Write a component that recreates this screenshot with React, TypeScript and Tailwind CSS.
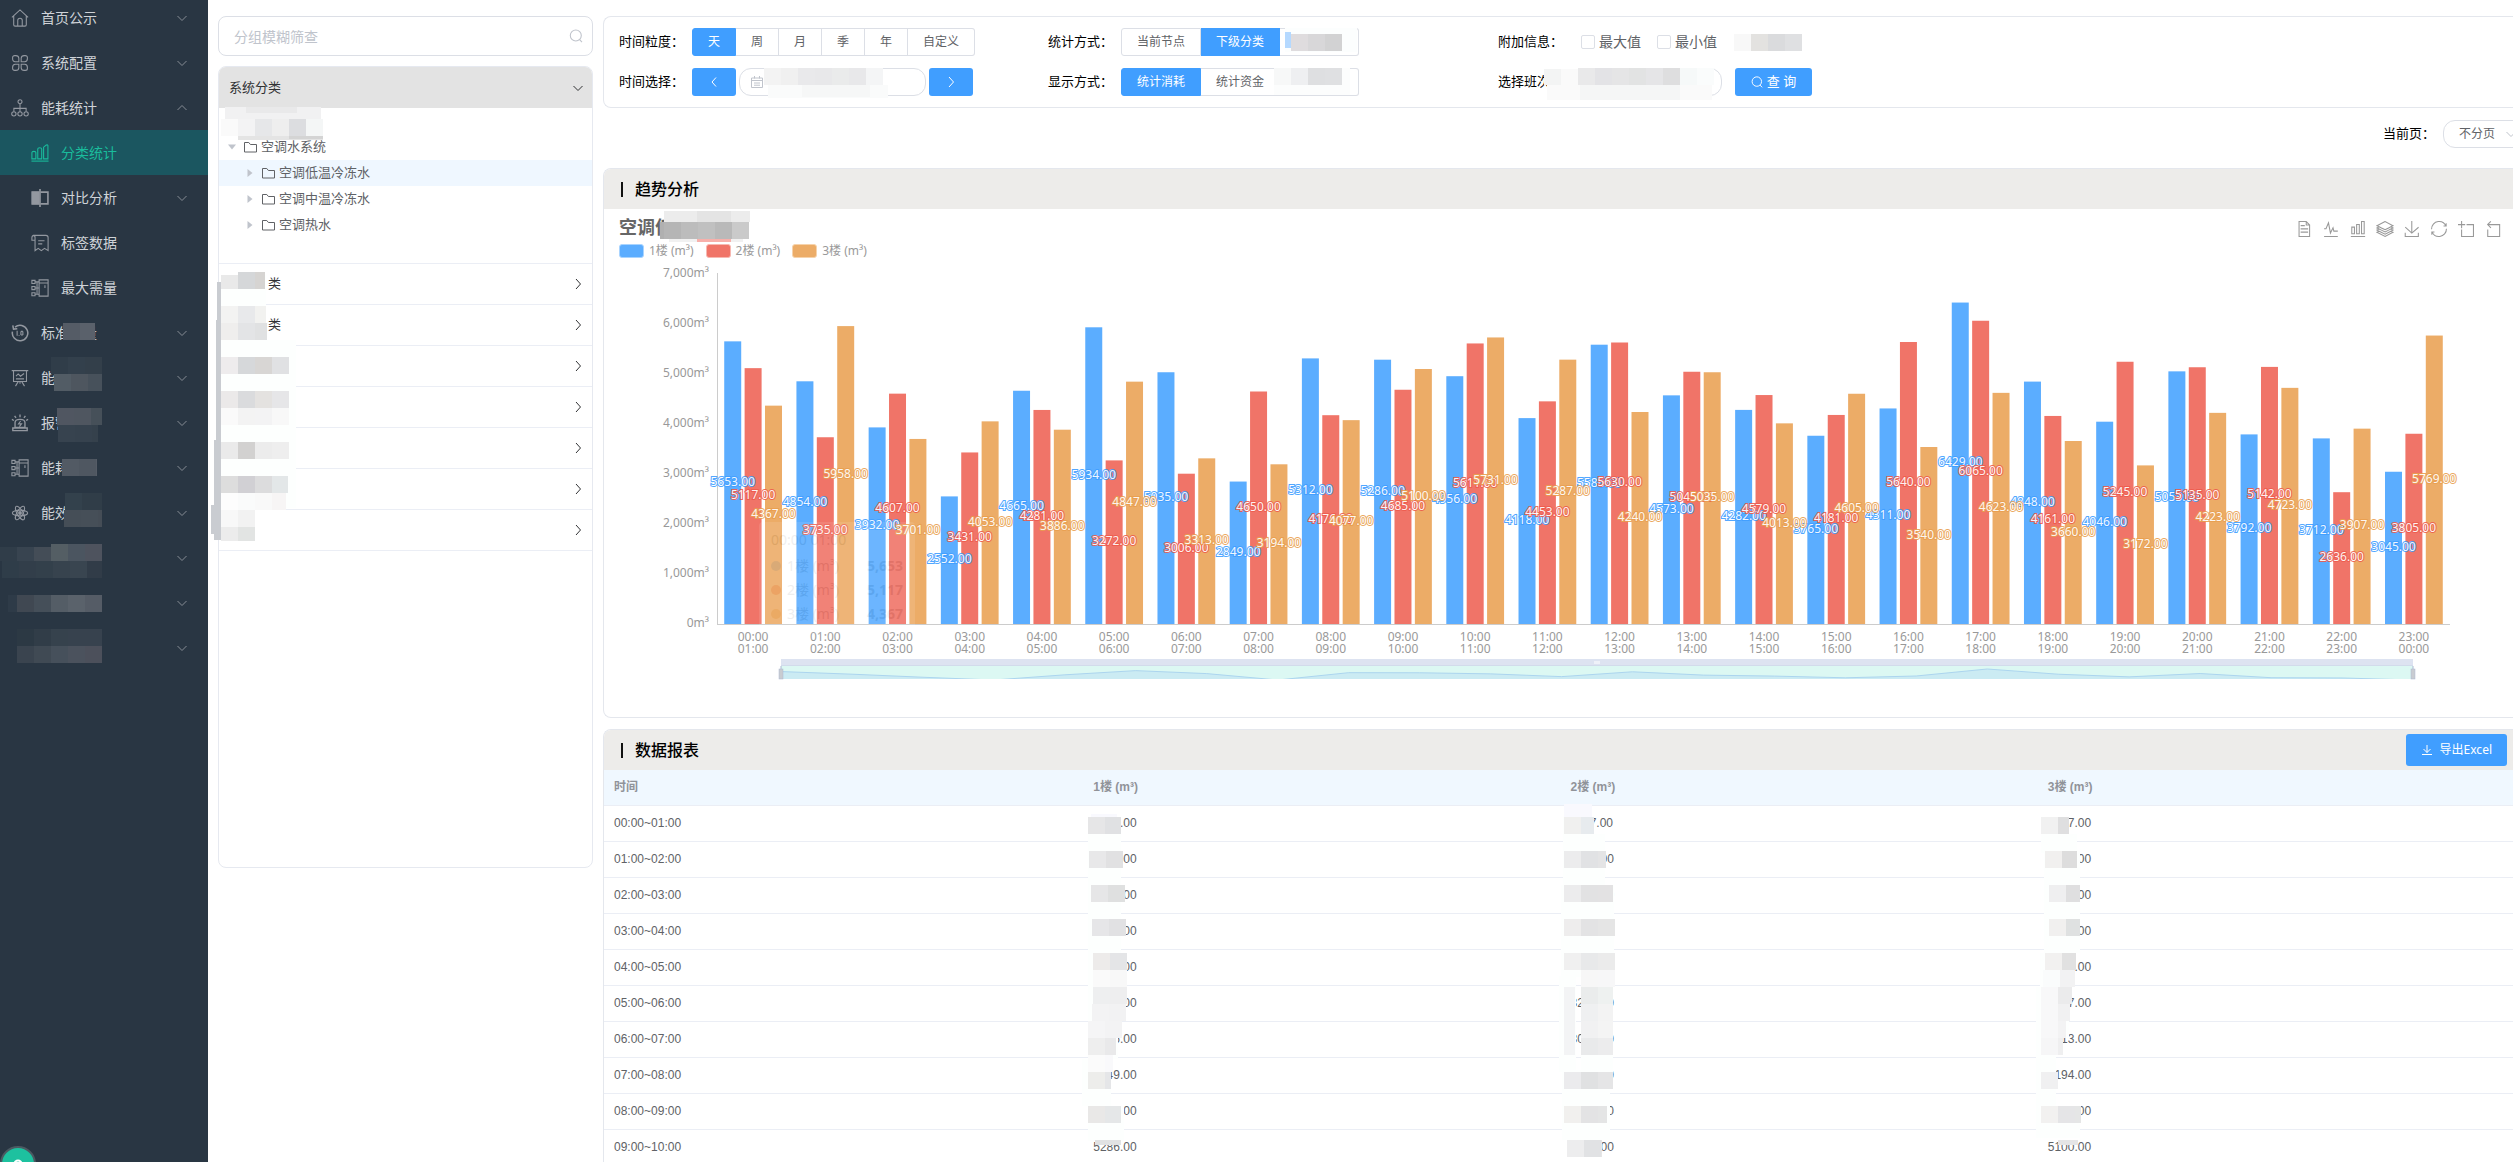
import { useLayoutEffect, useRef, useState } from "react";
import type { ReactNode } from "react";
import clsx from "clsx";

type Block = [x: number, y: number, width: number, height: number, fill: string];

const hours = Array.from({ length: 24 }, (_, i) => String(i).padStart(2, "0") + ":00");

const series = [
  {
    name: "1楼 (m³)",
    fill: "#5badff",
    stroke: "#409eff",
    dot: "bg-[#409eff]",
    swatch: "bg-[#5badff] border-[#a9d4ff]",
    data: [
      5653, 4854, 3932, 2552, 4665, 5934, 5035, 2849, 5312, 5286, 4956, 4118, 5586, 4573, 4282,
      3765, 4311, 6429, 4848, 4046, 5053, 3792, 3712, 3045,
    ],
  },
  {
    name: "2楼 (m³)",
    fill: "#f07468",
    stroke: "#ee5b4d",
    dot: "bg-[#ee5b4d]",
    swatch: "bg-[#f07468] border-[#f7b8b1]",
    data: [
      5117, 3735, 4607, 3431, 4281, 3272, 3006, 4650, 4176, 4685, 5611, 4453, 5630, 5045, 4579,
      4181, 5640, 6065, 4161, 5245, 5135, 5142, 2636, 3805,
    ],
  },
  {
    name: "3楼 (m³)",
    fill: "#ecac67",
    stroke: "#e99f4f",
    dot: "bg-[#e99f4f]",
    swatch: "bg-[#ecac67] border-[#f6d3ac]",
    data: [
      4367, 5958, 3701, 4053, 3886, 4847, 3313, 3194, 4077, 5100, 5731, 5287, 4240, 5035, 4013,
      4605, 3540, 4623, 3660, 3172, 4223, 4723, 3907, 5769,
    ],
  },
];

function Blocks({ className, blocks }: { className?: string; blocks: Block[] }) {
  const width = Math.max(...blocks.map((b) => b[0] + b[2]));
  const height = Math.max(...blocks.map((b) => b[1] + b[3]));
  return (
    <svg
      aria-hidden="true"
      width={width}
      height={height}
      shapeRendering="crispEdges"
      className={clsx("pointer-events-none absolute", className)}
    >
      {blocks.map(([x, y, w, h, fill], i) => (
        <rect key={i} x={x} y={y} width={w} height={h} fill={fill} />
      ))}
    </svg>
  );
}

// lays a list of colours out as one band of 17px tiles
function band(x: number, y: number, fills: string[], height = 17, last = 17): Block[] {
  return fills.map((fill, i) => [
    x + i * 17,
    y,
    i === fills.length - 1 ? last : 17,
    height,
    fill,
  ]);
}

function Chevron({ dir, className }: { dir: "up" | "down" | "left" | "right"; className?: string }) {
  const d = {
    up: "M1.5 8 6 3.5 10.5 8",
    down: "M1.5 4 6 8.5 10.5 4",
    left: "M8 1.5 4 6l4 4.5",
    right: "M4 1 8.5 6 4 11",
  }[dir];
  return (
    <svg viewBox="0 0 12 12" className={clsx("h-3 w-3 shrink-0", className)} fill="none" stroke="currentColor">
      <path d={d} />
    </svg>
  );
}

function SearchIcon({ className }: { className?: string }) {
  return (
    <svg viewBox="0 0 14 14" className={className} fill="none" stroke="currentColor" strokeWidth="1.1">
      <circle cx="6.8" cy="6.5" r="5.5" />
      <path d="m10.6 10.6 2.4 2.6" />
    </svg>
  );
}

const menuIcons: Record<string, ReactNode> = {
  home: (
    <path d="M1 9.2 10 1l9 8.2M3 7.8V17.5q0 1.5 1.5 1.5h11q1.5 0 1.5-1.5V7.8M7.5 19v-6.5q0-2.3 2.5-2.3t2.5 2.3V19" />
  ),
  grid: (
    <>
      <path d="M8.7 8.7H4.6A3 3 0 0 1 1.8 5.4V4A2.2 2.2 0 0 1 4 1.8h1.4a3.3 3.3 0 0 1 3.3 3z" />
      <path d="M11.3 8.7V4.8a3.3 3.3 0 0 1 3.3-3H16A2.2 2.2 0 0 1 18.2 4v1.4a3.3 3.3 0 0 1-3 3.3z" />
      <path d="M8.7 11.3v3.9a3.3 3.3 0 0 1-3.3 3H4A2.2 2.2 0 0 1 1.8 16v-1.4a3.3 3.3 0 0 1 3-3.3z" />
      <path d="M11.3 11.3h3.9a3.3 3.3 0 0 1 3 3.3V16a2.2 2.2 0 0 1-2.2 2.2h-1.4a3.3 3.3 0 0 1-3.3-3z" />
    </>
  ),
  tree: (
    <>
      <circle cx="10" cy="3" r="2.2" />
      <circle cx="3.2" cy="16.5" r="2.4" />
      <circle cx="10" cy="16.5" r="2.4" />
      <circle cx="16.8" cy="16.5" r="2.4" />
      <path d="M10 5.2v8.9M3.2 14v-3.6h13.6V14" />
    </>
  ),
  bars: (
    <>
      <path d="M1 16.5V9.5q0-1.3 2.2-1.3t2.2 1.3v7zM7.5 16.5v-11q0-1.3 2.2-1.3t2.2 1.3v11zM14 16.5v-13L17 1.2q1.8-.7 1.8.8v14.5z" />
      <path d="M.5 19h19" />
    </>
  ),
  compare: (
    <>
      <path d="M1 3h8v14H1z" fill="currentColor" />
      <path d="M10 0v20M11 3.5h7.8v13H11" strokeWidth="1.8" />
    </>
  ),
  receipt: (
    <>
      <path d="M4.5 7H1V4q0-2.5 2.5-2.5h13q2.5 0 2.5 2.5v14.5l-4-2.5-3.5 2.5L8 16l-3.5 2.5V4q0-2.5-2-2.5" />
      <path d="M8 7.5h7M8 11h4.5" />
    </>
  ),
  server: (
    <>
      <path d="M9 1h10v18H9zM9 4.5h10M15.5 7v3" />
      <path d="M1 1.5h3.5v3.5H1zM1 8.3h3.5v3.5H1zM1 15.2h3.5v3.5H1zM4.5 3.2H9M4.5 10H9M4.5 17H9M6.7 3.2V17" />
    </>
  ),
  gauge: (
    <>
      <path d="M4.5 3.5A8.6 8.6 0 1 1 1.6 8.5M2 1.5l.8 4.2 4.2-.4" strokeWidth="1.7" />
      <path d="M6.8 7.5v5.5M13.2 8.2v4M11 8.2v4M11 8.2h2.2M11 12.2h2.2M9 12.3v.7" />
    </>
  ),
  board: (
    <>
      <path d="M.8 1.8h18.4M2.8 1.8v12h14.4v-12M8 14l-3 5M12 14l3 5M10 14v2.5" />
      <path d="m5.5 8 2.5-2.5 2.5 2.5 4-3M5.5 11h9" />
    </>
  ),
  alarm: (
    <>
      <path d="M4.5 15V9.5q0-3.5 5.5-3.5t5.5 3.5V15zM2 15.5h16v3H2zM10 .5v3M4 2l1.6 2.3M16 2l-1.6 2.3M1 6l2.2 1.2M19 6l-2.2 1.2" strokeWidth="1.5" />
      <path d="M10.7 7.8 8.3 11h3.4l-2.4 3" />
    </>
  ),
  atom: (
    <>
      <ellipse cx="10" cy="10" rx="8.5" ry="3.2" />
      <ellipse cx="10" cy="10" rx="8.5" ry="3.2" transform="rotate(60 10 10)" />
      <ellipse cx="10" cy="10" rx="8.5" ry="3.2" transform="rotate(120 10 10)" />
      <circle cx="10" cy="10" r="1.5" fill="currentColor" />
    </>
  ),
};

const menu = [
  { icon: "home", label: "首页公示", arrow: "down" },
  { icon: "grid", label: "系统配置", arrow: "down" },
  { icon: "tree", label: "能耗统计", arrow: "up" },
  { icon: "bars", label: "分类统计", child: true, active: true },
  { icon: "compare", label: "对比分析", child: true, arrow: "down" },
  { icon: "receipt", label: "标签数据", child: true },
  { icon: "server", label: "最大需量", child: true },
  { icon: "gauge", label: "标准用量", arrow: "down" },
  { icon: "board", label: "能", arrow: "down" },
  { icon: "alarm", label: "报警", arrow: "down" },
  { icon: "server", label: "能耗", arrow: "down" },
  { icon: "atom", label: "能效", arrow: "down" },
  { arrow: "down" },
  { arrow: "down" },
  { arrow: "down" },
] as {
  icon?: string;
  label?: string;
  child?: boolean;
  active?: boolean;
  arrow?: "up" | "down";
}[];

const menuBlocks: Block[] = [
  ...band(63, 323, ["#555c66", "#5a616b"], 17, 15),
  ...band(51, 357, ["#303d49", "#33404c", "#333f4a"]),
  ...band(54, 374, ["#525c65", "#4e565f", "#47515b"], 17, 14),
  ...band(57, 408, ["#505661", "#4f5660", "#465059"], 17, 11),
  ...band(58, 425, ["#37434f", "#36424e", "#35414c"], 17, 6),
  ...band(62, 459, ["#525a64", "#4f5761", "#555c66"], 17, 1),
  ...band(65, 493, ["#33414c", "#303d48", "#303d48"], 17, 3),
  ...band(64, 510, ["#454e57", "#464f58", "#454d56"], 17, 4),
  ...band(0, 547, ["#303d49", "#384450", "#444d57"], 14),
  ...band(51, 544, ["#545e64", "#4b5560", "#4e535e"]),
  ...band(2, 561, ["#2f3d49", "#323e4a", "#33404b", "#37434e", "#394550", "#313c48"], 17, 15),
  [8, 595, 9, 17, "#2e3b48"],
  ...band(17, 595, ["#404852", "#454f59", "#545d66", "#5a626b", "#555c66"]),
  ...band(17, 629, ["#2c3944", "#313d48", "#36424d", "#37424e", "#37424e"]),
  ...band(17, 646, ["#3a444f", "#404a54", "#46505b", "#4b525d", "#4c505b"]),
];

function Sidebar() {
  return (
    <aside className="relative w-52 shrink-0 overflow-hidden bg-[#293643] text-sm text-[#cfd3d8]">
      <nav>
        <ul className="-mt-[5px]">
          {menu.map((item, i) => (
            <li key={i}>
              <a
                href="#"
                aria-label={item.label ?? "菜单"}
                className={clsx(
                  "flex h-[45px] items-center pr-5",
                  item.child ? "pl-[31px]" : "pl-[11px]",
                  item.active && "bg-[#1b5660] text-[#1abc9c]"
                )}
              >
                {item.icon && (
                  <svg
                    viewBox="0 0 20 20"
                    className={clsx("mr-3 h-[18px] w-[18px] shrink-0", !item.active && "text-[#9398a0]")}
                    fill="none"
                    stroke="currentColor"
                    strokeWidth="1.2"
                  >
                    {menuIcons[item.icon]}
                  </svg>
                )}
                <span>{item.label}</span>
                {item.arrow && <Chevron dir={item.arrow} className="ml-auto text-[#878d95]" />}
              </a>
            </li>
          ))}
        </ul>
      </nav>
      <Blocks className="left-0 top-0" blocks={menuBlocks} />
      <button
        type="button"
        aria-label="设置"
        className="absolute -bottom-5 left-0 flex h-9 w-9 items-center justify-center rounded-full border-2 border-[#4b5a62] bg-[#1dc19f] text-white"
      >
        <svg viewBox="0 0 10 10" className="h-2.5 w-2.5" fill="none" stroke="currentColor" strokeWidth="2">
          <circle cx="5" cy="5" r="3.5" />
        </svg>
      </button>
    </aside>
  );
}

const treeNodes = [
  { label: "空调低温冷冻水", active: true },
  { label: "空调中温冷冻水" },
  { label: "空调热水" },
];

// origin is the top left corner of the whole column
const treeBlocks: Block[] = [
  [17, 107, 96, 12, "#f1f1f2"],
  [38, 107, 51, 6, "#e9e9ea"],
  ...band(13, 119, ["#fafafa", "#f3f3f4", "#e6e7e9", "#eeeeee", "#dcdde0", "#f4f6f6"]),
  [30, 136, 85, 4, "#e4e4e4"],
  [81, 136, 34, 3, "#d4d4d4"],
  [9, 282, 4, 220, "#c9ccd1"],
  [8, 320, 5, 150, "#c9ccd1"],
  [6, 440, 7, 80, "#c9ccd1"],
  [3, 505, 10, 29, "#c9ccd1"],
  [6, 534, 8, 6, "#c9ccd1"],
  [13, 275, 45, 70, "#fdfffe"],
  [13, 340, 75, 168, "#fdfffe"],
  [13, 508, 34, 32, "#fdfffe"],
  ...band(13, 275, ["#e9e9e9"], 14),
  ...band(30, 272, ["#d5d7d9", "#d6d4d2"], 17, 10),
  ...band(13, 306, ["#f3f3f2", "#e8e9eb", "#f2f2f0"], 17, 11),
  ...band(13, 323, ["#efeeed", "#e3e4e6", "#e0e1e2"], 17, 12),
  ...band(13, 357, ["#eeeced", "#d6d8da", "#d8d6d4", "#e0e1e3"]),
  ...band(13, 391, ["#ebe9e9", "#dadbdd", "#e4e2e0", "#e6e6e8"]),
  ...band(13, 408, ["#fafafa", "#f3f3f3", "#f3f3f4", "#f8f8f8"]),
  ...band(13, 442, ["#eaeaea", "#d2d1d0", "#ececec", "#eeeeee"]),
  ...band(13, 476, ["#dddddd", "#d1d0d4", "#dcdcdd", "#e3e7e8"], 17, 16),
  ...band(13, 493, ["#fdfdfd", "#fafbfb", "#f9f9f9", "#f7f5f5"], 17, 14),
  ...band(13, 510, ["#f8f8f8", "#f2f2f2"]),
  ...band(13, 527, ["#ececec", "#e2e4e3"], 14),
];

function FolderIcon() {
  return (
    <svg viewBox="0 0 13 12" className="mr-1 h-3 w-[13px] shrink-0" fill="none" stroke="#606266">
      <path d="M.5 1.500h4.300l1.600 2h6.100v7.500H.5z" />
    </svg>
  );
}

function CategoryPanel() {
  return (
    <div className="relative flex w-[385px] shrink-0 flex-col gap-[10px] pb-4 pl-[10px] pt-4 text-[13px] text-[#606266]">
      <div className="relative">
        <input
          type="text"
          aria-label="分组模糊筛查"
          placeholder="分组模糊筛查"
          className="h-10 w-full rounded-lg border border-[#dcdfe6] px-[15px] text-sm placeholder:text-[#c0c4cc]"
        />
        <SearchIcon className="absolute right-[10px] top-[13px] h-3.5 w-3.5 text-[#c0c4cc]" />
      </div>

      <div className="h-[802px] overflow-hidden rounded-lg border border-[#e6e9f0]">
        <button
          type="button"
          className="flex h-[41px] w-full items-center justify-between bg-[#e3e3e3] pl-[10px] pr-2 text-[#303133]"
        >
          系统分类
          <Chevron dir="down" />
        </button>
        <ul className="h-[156px] border-b border-[#ebeef5] pt-[26px]">
          <li className="flex h-[26px] items-center pl-[9px]">
            <svg viewBox="0 0 8 8" className="mr-2 h-2 w-2" fill="#c0c4cc">
              <path d="M0 1.500h8L4 6.500z" />
            </svg>
            <FolderIcon />
            空调水系统
          </li>
          {treeNodes.map((node) => (
            <li
              key={node.label}
              className={clsx("flex h-[26px] items-center pl-[27px]", node.active && "bg-[#eff7ff]")}
            >
              <svg viewBox="0 0 8 8" className="mr-2 h-2 w-2" fill="#c0c4cc">
                <path d="M1.500 0v8L6.500 4z" />
              </svg>
              <FolderIcon />
              {node.label}
            </li>
          ))}
        </ul>
        {["类", "类", "", "", "", "", ""].map((label, i) => (
          <button
            key={i}
            type="button"
            aria-label="分类"
            className="flex h-[41px] w-full items-center border-b border-[#ebeef5] pl-[49px] pr-2 text-[#303133]"
          >
            {label}
            <Chevron dir="right" className="ml-auto" />
          </button>
        ))}
      </div>
      <Blocks className="left-0 top-0" blocks={treeBlocks} />
    </div>
  );
}

function Segments({ items, active }: { items: string[]; active: string }) {
  return (
    <div className="flex h-7 text-xs">
      {items.map((item, i) => (
        <button
          key={i}
          type="button"
          aria-label={item || "其他"}
          aria-pressed={item === active}
          className={clsx(
            "whitespace-nowrap border-y border-r px-[15px] first:rounded-l-[3px] first:border-l last:rounded-r-[3px]",
            !item && "w-[79px]",
            item === active
              ? "border-[#409eff] bg-[#409eff] text-white"
              : "border-[#dcdfe6] bg-white text-[#606266]"
          )}
        >
          {item}
        </button>
      ))}
    </div>
  );
}

function Field({ label, children }: { label: string; children: ReactNode }) {
  return (
    <div className="relative flex h-7 items-center">
      <span className="w-[73px] shrink-0 text-[13px] text-black">{label}</span>
      {children}
    </div>
  );
}

function Filters() {
  return (
    <form className="grid grid-cols-[429px_450px_1fr] gap-y-3 rounded-l-lg border border-r-0 border-[#e4e7ed] px-[15px] py-[11px]">
      <Field label="时间粒度：">
        <Segments items={["天", "周", "月", "季", "年", "自定义"]} active="天" />
      </Field>
      <Field label="统计方式：">
        <Segments items={["当前节点", "下级分类", ""]} active="下级分类" />
        <Blocks
          className="left-[236px] -top-1"
          blocks={[
            [1, 4, 72, 24, "#fcfefe"],
            [1, 8, 6, 16, "#b5d9ff"],
            ...band(7, 10, ["#dfdcde", "#d8d7d9", "#d2d2d3"]),
          ]}
        />
      </Field>
      <Field label="附加信息：">
        <div className="flex items-center gap-4 pl-[10px] text-sm text-[#606266]">
          {["最大值", "最小值"].map((name) => (
            <label key={name} className="flex items-center gap-1">
              <input
                type="checkbox"
                className="h-3.5 w-3.5 appearance-none rounded-[2px] border border-[#dcdfe6] bg-white"
              />
              {name}
            </label>
          ))}
        </div>
        <Blocks
          className="left-[236px] top-1.5"
          blocks={band(0, 0, ["#f8f8f8", "#e3e2e0", "#dadbdd", "#dfe0e2"])}
        />
      </Field>

      <Field label="时间选择：">
        <button
          type="button"
          aria-label="上一个"
          className="flex h-7 w-11 items-center justify-center rounded-[3px] bg-[#409eff] text-white"
        >
          <Chevron dir="left" />
        </button>
        <div className="relative mx-[3px]">
          <svg
            viewBox="0 0 12 12"
            className="absolute left-3 top-2 h-3 w-3"
            fill="none"
            stroke="#c0c4cc"
          >
            <path d="M.5 2h11v9.500H.5zM.5 4.500h11M3.500 0v2.500M8.500 0v2.500M3 7h6M3 9.200h6" />
          </svg>
          <input
            type="text"
            aria-label="时间选择"
            className="block h-7 w-[187px] rounded-xl border border-[#dcdfe6] pl-8 text-xs"
          />
        </div>
        <button
          type="button"
          aria-label="下一个"
          className="flex h-7 w-11 items-center justify-center rounded-[3px] bg-[#409eff] text-white"
        >
          <Chevron dir="right" />
        </button>
        <Blocks
          className="left-[145px] top-0"
          blocks={[
            [4, 17, 120, 13, "#fafbfb"],
            ...band(0, 0, ["#f3f3f3", "#f0f0f0", "#e9e9eb", "#e8e8ea", "#eaebeb", "#e8e8ea", "#f4f5f6"]),
            [38, 17, 68, 12, "#f6f7f7"],
          ]}
        />
      </Field>
      <Field label="显示方式：">
        <Segments items={["统计消耗", "统计资金", ""]} active="统计消耗" />
        <Blocks
          className="-top-1 left-[223px]"
          blocks={[
            [3, 4, 76, 27, "#fcfdfd"],
            ...band(3, 4, ["#f7f8f8", "#eeeff1", "#dedfe1", "#dfe0e2"]),
          ]}
        />
      </Field>
      <Field label="选择班次：">
        <input
          type="text"
          aria-label="选择班次"
          className="h-7 w-[151px] rounded-xl border border-[#dcdfe6] px-3 text-xs"
        />
        <button
          type="submit"
          className="ml-[13px] flex h-7 w-[77px] items-center justify-center gap-1 rounded-[3px] bg-[#409eff] text-[13px] text-white"
        >
          <SearchIcon className="h-3 w-3" />
          查 询
        </button>
        <Blocks
          className="left-[46px] top-0"
          blocks={[
            [3, 17, 165, 15, "#fafafa"],
            ...band(0, 1, ["#f3f4f4", "#fafafa"], 16),
            ...band(34, 0, ["#e9e9ea", "#e3e3e6", "#e5e5e6", "#e2e3e3", "#e5e5e7", "#dededf", "#f6f9f9", "#fafcfc"]),
            [36, 17, 100, 15, "#f5f6f6"],
          ]}
        />
      </Field>
    </form>
  );
}

const toolIcons = [
  { label: "数据视图", d: "M17.5,17.3H33M45.4,29.5h-28M11.5,2v56H51V14.8L38.4,2H11.5zM38.4,2.2v12.7H51M45.4,41.7h-28" },
  { label: "折线图", d: "M4.1,28.9h7.1l9.3-22l7.4,38l9.7-19.7l3,12.8h14.9M4.1,58h51.4" },
  { label: "柱状图", d: "M6.7,22.9h10V48h-10V22.9zM24.9,13h10v35h-10V13zM43.2,2h10v46h-10V2zM3.1,58h53.7" },
  { label: "堆叠", d: "M8.2,38.4l-8.4,4.1l30.6,15.3L60,42.5l-8.1-4.1l-21.5,11L8.2,38.4zM51.9,30l-8.1,4.2l-13.4,6.9l-13.9-6.9L8.2,30l-8.4,4.2l8.4,4.2l22.2,11l21.5-11l8.1-4.2L51.9,30zM51.9,21.7l-8.1,4.2L35.7,30l-5.3,2.8L24.9,30l-8.4-4.1l-8.3-4.2l-8.4,4.2L8.2,30l8.3,4.2l13.9,6.9l13.4-6.9l8.1-4.2l8.1-4.1L51.9,21.7zM30.4,2.2L-0.2,17.5l8.4,4.1l8.3,4.2l8.4,4.2l5.5,2.7l5.3-2.7l8.1-4.2l8.1-4.2l8.1-4.1L30.4,2.2z" },
  { label: "保存为图片", d: "M4.7,22.9L29.3,45.5L54.7,23.4M4.6,43.6L4.6,58L53.8,58L53.8,43.6M29.2,45.1L29.2,0" },
  { label: "还原", d: "M47,18.9h9.8V8.7M56.3,20.1C52.1,9,40.5,0.6,26.8,2.1C12.6,3.7,1.6,16.2,2.1,30.6M13,41.1H3.1v10.2M3.7,39.9c4.2,11.1,15.8,19.5,29.5,18c14.2-1.6,25.2-14.1,24.7-28.5" },
  { label: "区域缩放", d: "M0,13.5h26.9M13.5,26.9V0M32.1,13.5H58V58H13.5V32.1" },
  { label: "区域缩放还原", d: "M22,1.4L9.9,13.5l12.3,12.3M10.3,13.5H54.9v44.6H10.3v-26" },
];

const GRID_LEFT = 113;
const GRID_RIGHT = 63;
const AXIS_Y = 366;

function BarChart() {
  const ref = useRef<HTMLDivElement>(null);
  const [width, setWidth] = useState(1909);

  useLayoutEffect(() => {
    const el = ref.current;
    if (!el) return;
    const update = () => setWidth(el.clientWidth);
    update();
    const observer = new ResizeObserver(update);
    observer.observe(el);
    return () => observer.disconnect();
  }, []);

  const gridEnd = width - GRID_RIGHT;
  const step = (gridEnd - GRID_LEFT) / hours.length;
  const barWidth = (step * 0.8) / 3.4;
  const barX = (s: number, i: number) => GRID_LEFT + i * step + step * 0.1 + s * barWidth * 1.2;

  // zoom slider
  const zoomStart = 177;
  const zoomEnd = width - 100;
  const zoomStep = (zoomEnd - zoomStart) / (hours.length - 1);
  const shadow = series[0].data
    .map((v, i) => `${zoomStart + i * zoomStep},${Math.min(422, 411 + (6429 - v) * 0.0033)}`)
    .join(" ");

  return (
    <div ref={ref} className="relative h-[459px]">
      <svg width={width} height={459} className="block" fontSize="12">
        {[0, 1, 2, 3, 4, 5, 6, 7].map((n) => (
          <text key={n} x={GRID_LEFT - 8} y={AXIS_Y - n * 50 + 3} textAnchor="end" fill="#999">
            {n === 0 ? "0m³" : `${n},000m³`}
          </text>
        ))}
        {series.map((s, si) =>
          s.data.map((v, i) => (
            <rect
              key={`${si}-${i}`}
              x={barX(si, i)}
              y={AXIS_Y - v * 0.05}
              width={barWidth}
              height={v * 0.05}
              fill={s.fill}
            />
          ))
        )}
        <path
          d={`M${GRID_LEFT + 0.5} 15V${AXIS_Y + 0.5}H${gridEnd}`}
          fill="none"
          stroke="#ccc"
          shapeRendering="crispEdges"
        />
        {series.map((s, si) =>
          s.data.map((v, i) => (
            <text
              key={`${si}-${i}`}
              x={barX(si, i) + barWidth / 2}
              y={AXIS_Y - v * 0.025 + 3}
              textAnchor="middle"
              fill="#fff"
              stroke={s.stroke}
              strokeWidth="2"
              paintOrder="stroke"
              opacity="0.9"
            >
              {`${v}.00`}
            </text>
          ))
        )}
        {hours.map((h, i) => (
          <text key={h} textAnchor="middle" fill="#999">
            <tspan x={GRID_LEFT + (i + 0.5) * step} y={AXIS_Y + 17}>
              {h}
            </tspan>
            <tspan x={GRID_LEFT + (i + 0.5) * step} y={AXIS_Y + 29}>
              {hours[(i + 1) % 24]}
            </tspan>
          </text>
        ))}

        <rect x={zoomStart} y={401} width={zoomEnd - zoomStart} height={7} fill="#dde3f1" />
        <rect x={zoomStart} y={408} width={zoomEnd - zoomStart} height={13} fill="#dcf8f3" />
        <path d={`M${zoomStart} 407.5H${zoomEnd}`} stroke="#d2dbeb" />
        <clipPath id="zoom-clip">
          <rect x={zoomStart} y={401} width={zoomEnd - zoomStart} height={20} />
        </clipPath>
        <g clipPath="url(#zoom-clip)">
          <polygon points={`${zoomStart},421 ${shadow} ${zoomEnd},421`} fill="#cbebf3" />
          <polyline points={shadow} fill="none" stroke="#acd5ef" />
        </g>
        <path
          d={`M${(zoomStart + zoomEnd) / 2 - 2} 403v3m2-3v3m2-3v3`}
          stroke="#fff"
          strokeWidth="1"
        />
        {[zoomStart, zoomEnd].map((x) => (
          <g key={x}>
            <path d={`M${x} 408v4`} stroke="#acb8d1" />
            <rect x={x - 2} y={411} width={4} height={10} fill="#c9ccd1" stroke="#acb8d1" strokeWidth="0.5" />
          </g>
        ))}
      </svg>

      {/* tooltip, fading out */}
      <div className="absolute left-[155px] top-[264px] w-[156px] rounded bg-white px-3 py-2 text-sm text-[#666] opacity-10">
        <div className="mb-1">00:00 01:00</div>
        {series.map((s) => (
          <div key={s.name} className="flex h-6 items-center">
            <span className={clsx("mr-1.5 h-2.5 w-2.5 rounded-full", s.dot)} />
            {s.name}
            <b className="ml-auto">{s.data[0].toLocaleString("en-US")}</b>
          </div>
        ))}
      </div>
    </div>
  );
}

function CardHeader({ title, children }: { title: string; children?: ReactNode }) {
  return (
    <div className="flex h-10 items-center justify-between bg-[#edecea] pl-[17px] pr-1.5 text-black">
      <h2 className="flex items-center gap-3 text-base font-medium">
        <span className="h-[15px] w-[2px] bg-[#111]" />
        {title}
      </h2>
      {children}
    </div>
  );
}

function TrendCard() {
  return (
    <section className="overflow-hidden rounded-l-lg border border-r-0 border-[#e4e7ed]">
      <CardHeader title="趋势分析" />
      <div className="relative flex h-[35px] items-center justify-between pl-[15px] pr-3">
        <h3 className="text-lg font-bold text-[#666]">空调低</h3>
        <Blocks
          className="left-[55px] top-0.5"
          blocks={[
            [5, 0, 86, 11, "#ececec"],
            [38, 0, 34, 11, "#e4e4e4"],
            [1, 11, 4, 17, "#b0b0b0"],
            ...band(5, 11, ["#b5b5b5", "#bcbcbc", "#c0c0c0", "#b9b9b9", "#cacaca"]),
            [10, 28, 74, 3, "#f1f1f1"],
            [38, 28, 34, 3, "#f7b0ab"],
          ]}
        />
        <div className="flex gap-[11px] pt-1">
          {toolIcons.map((icon) => (
            <button key={icon.label} type="button" aria-label={icon.label} title={icon.label}>
              <svg
                viewBox="0 0 60 60"
                className="block h-4 w-4 overflow-visible"
                fill="none"
                stroke="#999"
                strokeWidth="4"
              >
                <path d={icon.d} />
              </svg>
            </button>
          ))}
        </div>
      </div>
      <ul className="flex h-3.5 items-center gap-3 pl-[15px] text-xs text-[#999]">
        {series.map((s) => (
          <li key={s.name} className="flex items-center gap-[5px]">
            <span className={clsx("h-3.5 w-[25px] rounded-[3px] border", s.swatch)} />
            {s.name}
          </li>
        ))}
      </ul>
      <BarChart />
    </section>
  );
}

// tiles laid over the figures of each value column, from the top of its header cell
const tableBlocks: Block[][] = [
  [
    [10, 44, 26, 4, "#f9f9fe"],
    [7, 47, 33, 204, "#fdfffe"],
    [7, 251, 30, 38, "#fdfffe"],
    [1, 289, 29, 47, "#fdfffe"],
    [7, 336, 36, 35, "#fdfffe"],
    ...band(7, 47, ["#e6e6e7", "#e0e1e3"], 17, 16),
    ...band(8, 81, ["#e8e8e9", "#e1e1e2"]),
    ...band(10, 115, ["#e6e6e7", "#dfe0e0"]),
    ...band(11, 149, ["#e6e6e8", "#e1e1e3"]),
    ...band(12, 183, ["#edebea", "#e4e5e7"]),
    ...band(12, 200, ["#fafafa", "#f8f8f8"]),
    ...band(12, 217, ["#eeeff0", "#eeeeef"]),
    ...band(11, 234, ["#f3f3f4", "#f2f2f3"]),
    ...band(7, 251, ["#f5f5f6", "#f3f3f4"]),
    ...band(7, 268, ["#eeeeee", "#e9e9ea"], 17, 11),
    ...band(7, 285, ["#fbfbfb", "#f9f9fb"], 17, 8),
    ...band(7, 302, ["#ededeb", "#e5e6e8"], 17, 6),
    ...band(7, 336, ["#e9e8e7", "#e5e7e8"], 17, 16),
    [14, 370, 26, 5, "#e1e2e3"],
  ],
  [
    [5, 34, 28, 13, "#f9f9fe"],
    [4, 47, 30, 17, "#fdfffe"],
    [4, 64, 42, 54, "#fdfffe"],
    [2, 115, 53, 92, "#fdfffe"],
    [0, 206, 17, 96, "#fdfffe"],
    [22, 206, 32, 96, "#fdfffe"],
    [3, 300, 48, 70, "#fdfffe"],
    ...band(5, 47, ["#f0f0ef", "#e7ebee"], 17, 13),
    ...band(5, 81, ["#ececed", "#e1e2e4", "#e4e4e5"], 17, 8),
    ...band(5, 115, ["#ececed", "#e2e2e3", "#e3e2e3"], 17, 15),
    ...band(5, 149, ["#eeeded", "#e3e3e4", "#e5e5e5"]),
    ...band(5, 183, ["#f0f0f0", "#e8e9ea", "#ebebeb"]),
    ...band(22, 200, ["#f7f7f7", "#f7f7f8"]),
    ...band(22, 217, ["#eaecec", "#eef1f0"], 17, 15),
    ...band(22, 234, ["#eff0f1", "#f3f3f3"], 17, 15),
    ...band(22, 251, ["#f1f1f2", "#f4f4f4"], 17, 15),
    ...band(22, 268, ["#e9eaeb", "#ececed"], 17, 15),
    [5, 217, 11, 68, "#f3f4f5"],
    ...band(5, 302, ["#ebebed", "#e0e1e2", "#e5e5e6"], 17, 15),
    ...band(5, 336, ["#f1f0ee", "#e3e3e4", "#e4e5e5"], 17, 9),
    ...band(8, 370, ["#ededee", "#e1e2e4", "#e6e6e6"], 17, 1),
  ],
  [
    [5, 47, 28, 17, "#fdfffe"],
    [5, 64, 36, 19, "#fdfffe"],
    [8, 81, 36, 102, "#fdfffe"],
    [4, 183, 35, 34, "#fdfffe"],
    [0, 217, 33, 50, "#fdfffe"],
    [0, 251, 26, 34, "#fdfffe"],
    [0, 285, 20, 51, "#fdfffe"],
    [0, 336, 44, 32, "#fdfffe"],
    ...band(5, 47, ["#f1f1f1", "#dfdfe0"], 17, 11),
    ...band(9, 81, ["#f1f0ef", "#dddddd"], 17, 15),
    ...band(13, 115, ["#efeff0", "#dfdfe0"], 17, 14),
    ...band(13, 149, ["#f1f0ef", "#dfe1e1"], 17, 14),
    ...band(9, 183, ["#f2f1f0", "#e1e1e1"], 17, 14),
    ...band(7, 200, ["#fafcfc", "#f2f2f3"], 17, 15),
    ...band(5, 217, ["#f8f8f9", "#ebebec"], 17, 14),
    ...band(5, 234, ["#f8f8f9", "#f1f1f2"], 17, 12),
    ...band(5, 251, ["#f8f8f9", "#f3f3f4"], 17, 8),
    ...band(5, 268, ["#f6f6f7", "#efeff0"], 17, 5),
    ...band(5, 302, ["#f0f0f1"]),
    ...band(5, 336, ["#f2f1f0", "#e5e5e7", "#e5e6e6"], 17, 6),
    [22, 370, 20, 5, "#e5e5e6"],
  ],
];

function ReportCard() {
  return (
    <section className="overflow-hidden rounded-tl-lg border border-b-0 border-r-0 border-[#e4e7ed]">
      <CardHeader title="数据报表">
        <button
          type="button"
          className="flex h-8 items-center gap-[7px] rounded-[3px] bg-[#409eff] px-[15px] text-xs text-white"
        >
          <svg viewBox="0 0 12 12" className="h-3 w-3" fill="none" stroke="currentColor">
            <path d="M6 1v7.500M2.500 5 6 8.500 9.500 5M1 10.500h10" />
          </svg>
          导出Excel
        </button>
      </CardHeader>
      <table className="w-full table-fixed border-collapse text-left font-['Liberation_Sans','Noto_Sans_CJK_SC',sans-serif] text-xs text-[#606266]">
        <thead>
          <tr className="h-[35px] border-b border-[#ebeef5] bg-[#f0f8ff] text-[#909399]">
            <th className="px-[10px] font-bold">时间</th>
            {series.map((s, i) => (
              <th key={s.name} className="relative px-3 font-bold">
                {s.name}
                <Blocks className="left-0 top-0 z-10" blocks={tableBlocks[i]} />
              </th>
            ))}
          </tr>
        </thead>
        <tbody>
          {hours.slice(0, 10).map((h, i) => (
            <tr key={h} className="h-9 border-b border-[#ebeef5]">
              <td className="px-[10px]">{`${h}~${hours[i + 1]}`}</td>
              {series.map((s) => (
                <td key={s.name} className="px-3">
                  {`${s.data[i]}.00`}
                </td>
              ))}
            </tr>
          ))}
        </tbody>
      </table>
    </section>
  );
}

export default function App() {
  return (
    <div className="flex h-screen overflow-hidden bg-white font-['Noto_Sans','Noto_Sans_CJK_SC',sans-serif]">
      <Sidebar />
      <CategoryPanel />
      <main className="min-w-0 flex-1 overflow-hidden pl-[10px] pt-4">
        <Filters />
        <div className="-mr-5 flex items-center justify-end pb-5 pt-3">
          <label htmlFor="page-select" className="mr-2 text-[13px] text-black">
            当前页：
          </label>
          <div className="relative">
            <select
              id="page-select"
              className="block h-7 w-[90px] appearance-none rounded-xl border border-[#dcdfe6] bg-white px-[15px] text-xs text-[#606266]"
            >
              <option>不分页</option>
            </select>
            <Chevron dir="down" className="absolute right-4 top-2 text-[#c0c4cc]" />
          </div>
        </div>
        <div className="flex flex-col gap-[11px]">
          <TrendCard />
          <ReportCard />
        </div>
      </main>
    </div>
  );
}
